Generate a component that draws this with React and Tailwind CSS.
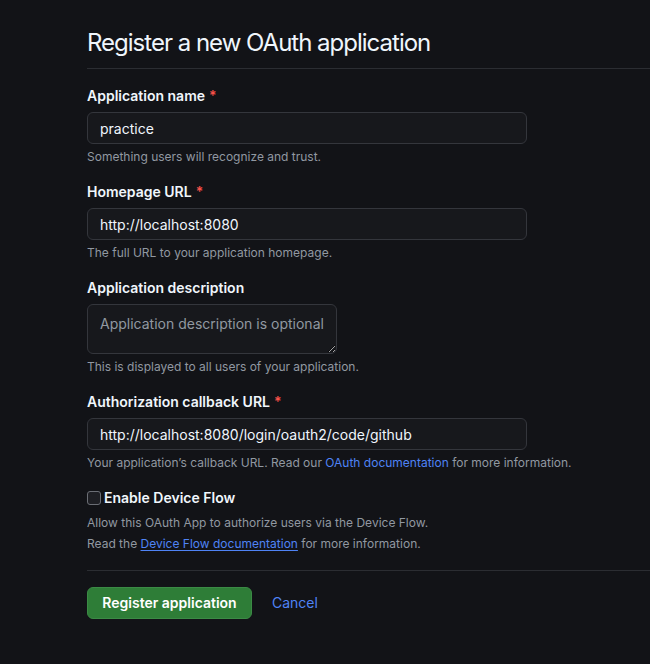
import React from 'react';

// GitHub dark theme – "Register a new OAuth application" form
function Label({ children, required }) {
  return (
    <label className="block text-sm font-semibold leading-5 text-[#f0f6fc]">
      {children}
      {required && <span className="ml-1 text-[#f85149]">*</span>}
    </label>
  );
}

function Hint({ children }) {
  return <p className="mt-1 text-xs leading-[18px] text-[#9198a1]">{children}</p>;
}

function TextInput({ value }) {
  return (
    <input
      readOnly
      value={value}
      className="mt-1.5 block h-8 w-[440px] rounded-md border border-[#34363c] bg-[#17181c] px-3 text-sm text-[#f0f6fc] outline-none"
    />
  );
}

export default function App() {
  return (
    <div
      className="min-h-[664px] bg-[#121317] pl-[87px] pt-[25px] text-[#f0f6fc]"
      style={{ fontFamily: 'Inter, "Noto Sans", sans-serif' }}
    >
      <h1 className="border-b border-[#2b2d32] pb-[7px] text-2xl font-normal leading-9 tracking-[-1px] text-[#f0f6fc]">
        Register a new OAuth application
      </h1>

      <form className="pt-[17px]">
        {/* 应用名 */}
        <div>
          <Label required>Application name</Label>
          <TextInput value="practice" />
          <Hint>Something users will recognize and trust.</Hint>
        </div>

        {/* 主页 */}
        <div className="mt-4">
          <Label required>Homepage URL</Label>
          <TextInput value="http://localhost:8080" />
          <Hint>The full URL to your application homepage.</Hint>
        </div>

        {/* 描述 */}
        <div className="mt-4">
          <Label>Application description</Label>
          <textarea
            readOnly
            placeholder="Application description is optional"
            className="mt-1.5 block h-[50px] w-[250px] resize rounded-md border border-[#34363c] bg-[#17181c] px-3 pb-1 pt-[9px] text-sm leading-5 text-[#f0f6fc] outline-none placeholder:text-[#9198a1]"
          />
          <Hint>This is displayed to all users of your application.</Hint>
        </div>

        {/* 回调地址 */}
        <div className="mt-4">
          <Label required>Authorization callback URL</Label>
          <TextInput value="http://localhost:8080/login/oauth2/code/github" />
          <Hint>
            Your application’s callback URL. Read our{' '}
            <a className="text-[#4f83f5]">OAuth documentation</a> for more information.
          </Hint>
        </div>

        {/* Device Flow */}
        <div className="mt-4">
          <label className="flex items-center gap-[3px] text-sm font-semibold leading-5">
            <span className="block h-[14px] w-[14px] rounded-[3px] border border-[#6b6e75] bg-[#1e1f24]" />
            Enable Device Flow
          </label>
          <p className="mt-1.5 text-xs leading-[18px] text-[#9198a1]">
            Allow this OAuth App to authorize users via the Device Flow.
          </p>
          <p className="mt-[3px] text-xs leading-[18px] text-[#9198a1]">
            Read the{' '}
            <a className="text-[#4f83f5] underline underline-offset-2">Device Flow documentation</a>{' '}
            for more information.
          </p>
        </div>

        <div className="mt-[17px] border-t border-[#2b2d32] pt-4">
          <div className="flex items-center gap-5">
            <button
              type="button"
              className="h-8 w-[165px] rounded-md border border-[#3b8a45] bg-[#2e7d37] text-sm font-semibold text-white"
            >
              Register application
            </button>
            <a className="text-sm text-[#4f83f5]">Cancel</a>
          </div>
        </div>
      </form>
    </div>
  );
}
